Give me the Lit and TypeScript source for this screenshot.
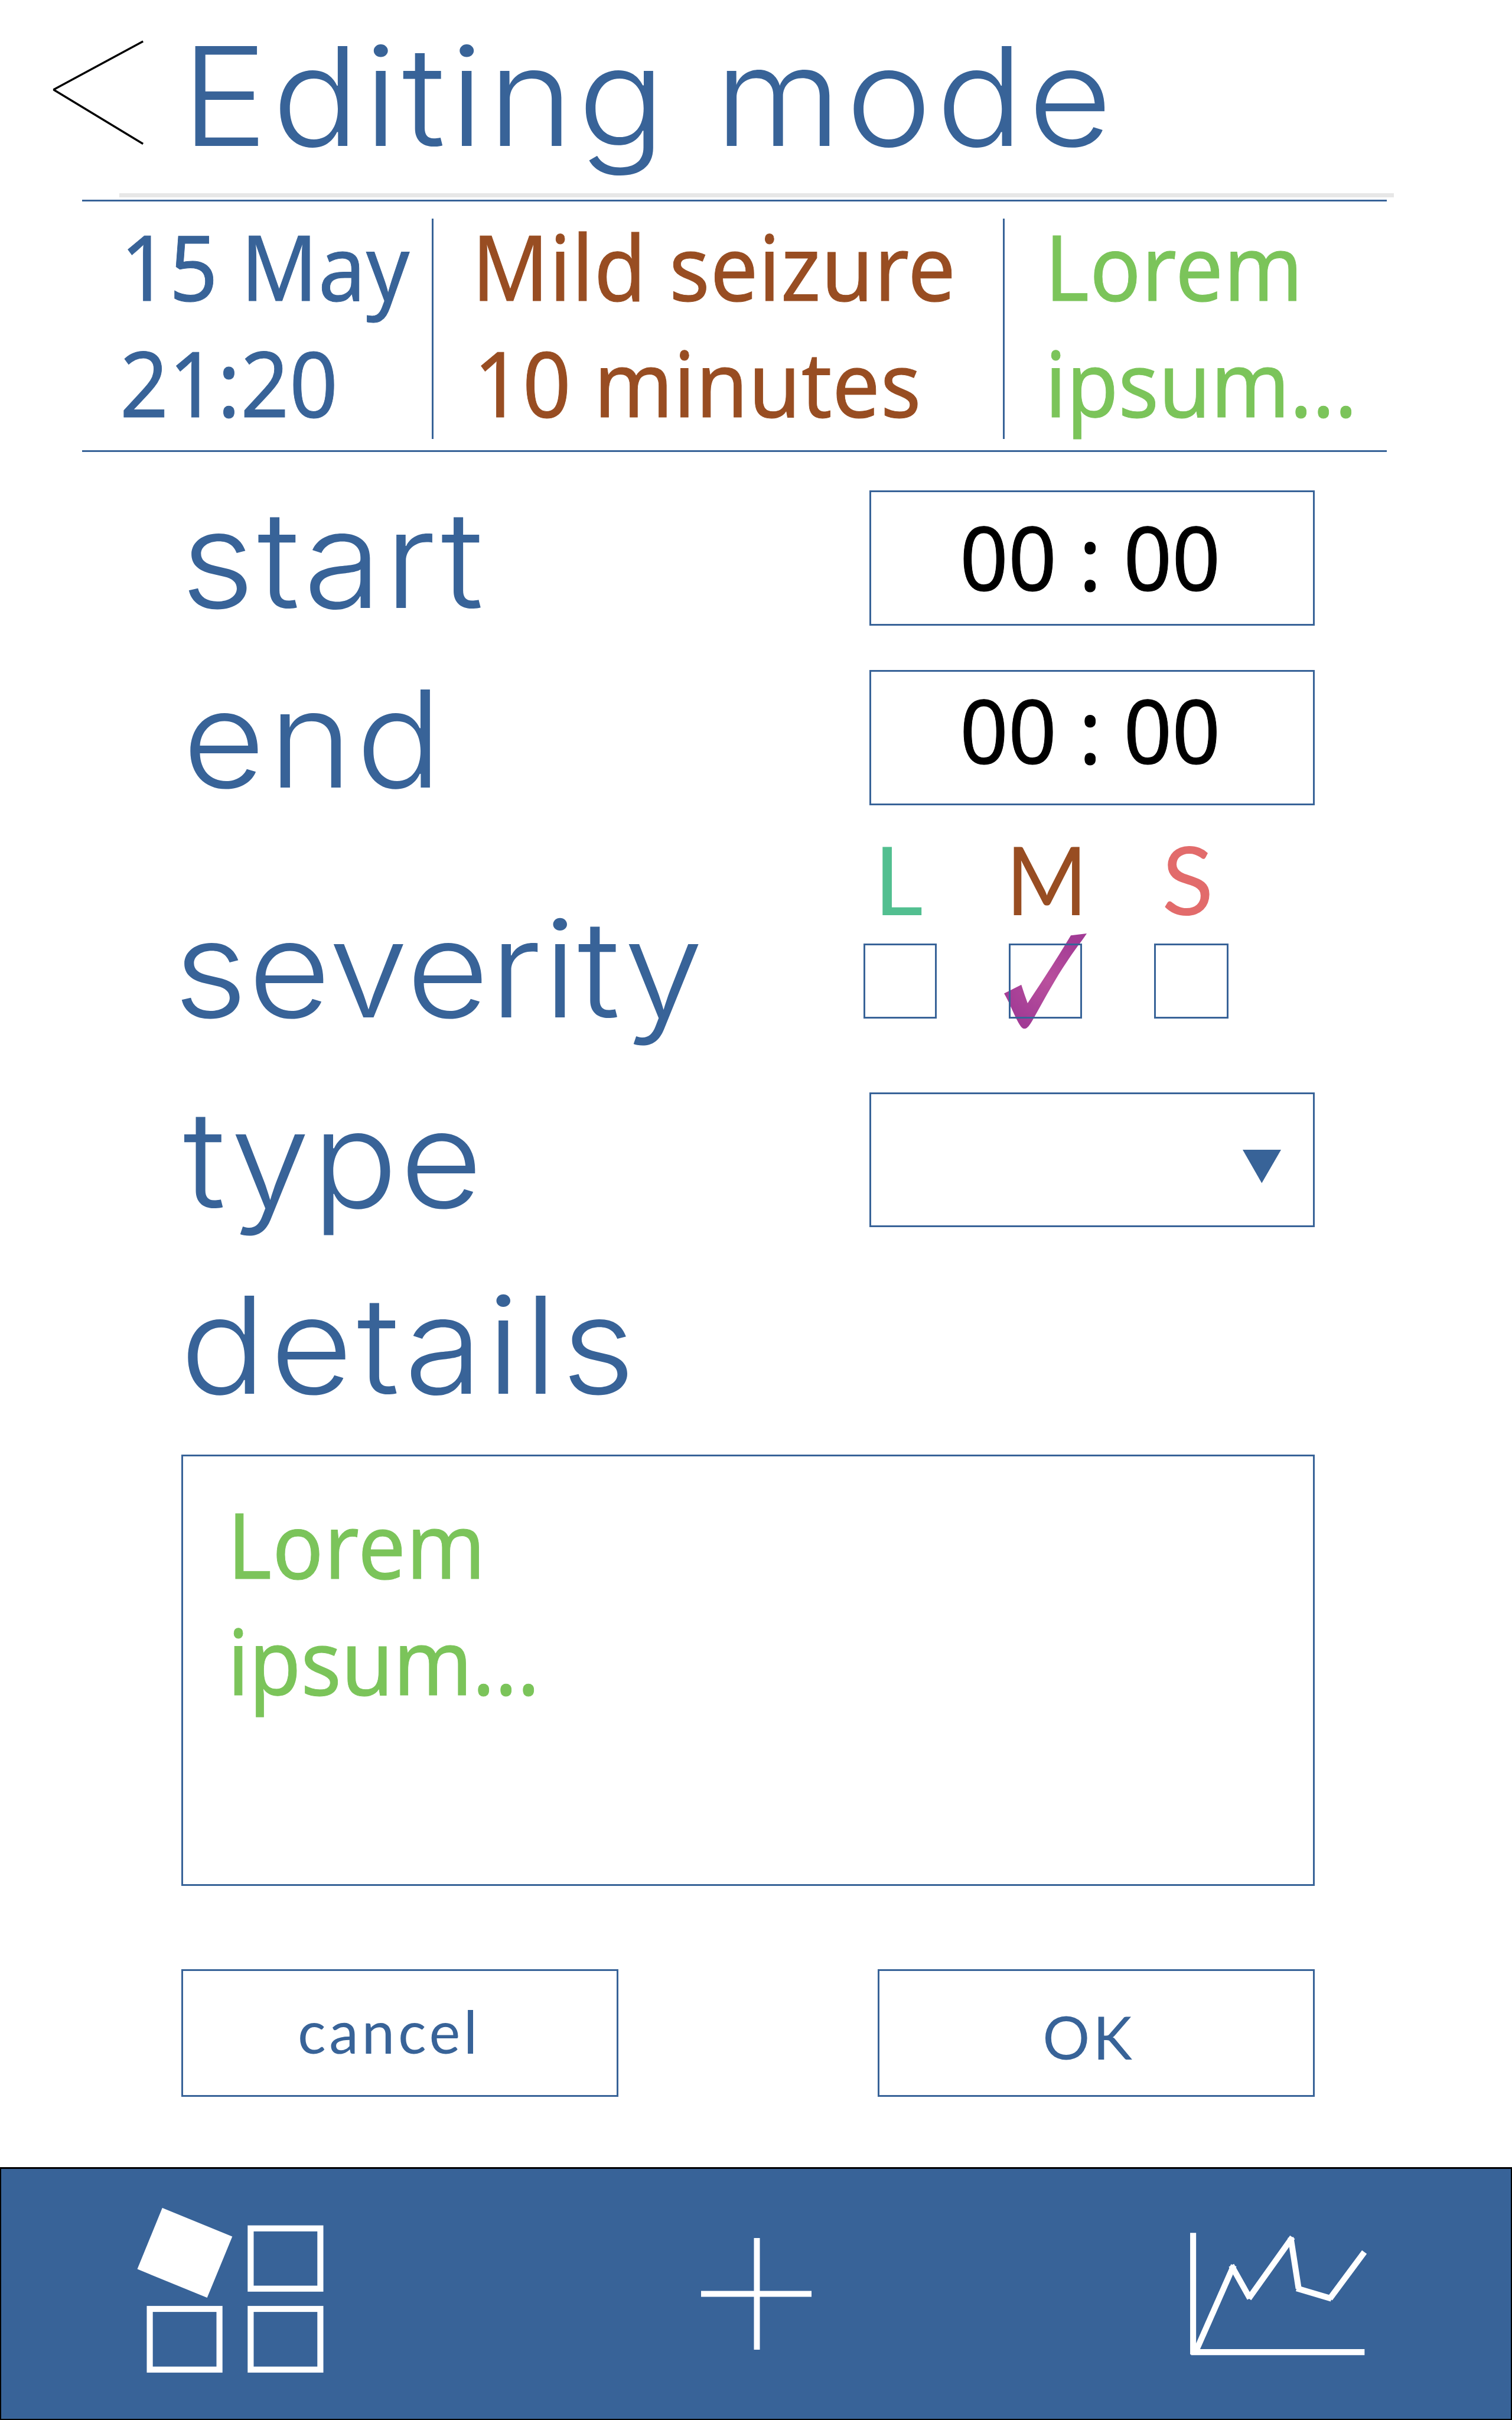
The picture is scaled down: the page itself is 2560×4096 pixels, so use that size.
import { LitElement, html, css, svg } from "lit";
import { customElement, property, state } from "lit/decorators.js";

const palette = css`
  :host {
    --blue: #386398;
    --brown: #984d22;
    --green: #7bc45a;
    --mint: #52bf90;
    --coral: #e26b6b;
    --humanist: "Noto Sans", "Open Sans", sans-serif;
    --heading: Inter, Roboto, sans-serif;
    --geometric: Lato, "Open Sans", sans-serif;
    box-sizing: border-box;
  }
  * {
    box-sizing: border-box;
  }
  svg {
    display: block;
    flex: none;
  }
`;

@customElement("title-bar")
class TitleBar extends LitElement {
  @property() heading = "";
  static styles = [
    palette,
    css`
      :host {
        display: flex;
        align-items: flex-start;
        height: 327px;
        padding-left: 88px;
      }
      .back {
        margin-top: 66px;
      }
      h1 {
        margin: 9px 0 0 61px;
        font: 300 232px/308.6px var(--heading);
        letter-spacing: 6.9px;
        color: var(--blue);
        white-space: nowrap;
        transform: scaleX(1.06);
        transform-origin: 0 50%;
      }
    `,
  ];
  render() {
    return html`
      <svg class="back" width="158" height="182" viewBox="88 66 158 182">
        <path d="M242.2 69.9 L90.7 151.8 L242.2 243.5" fill="none" stroke="#000" stroke-width="3.4" stroke-linejoin="bevel" />
      </svg>
      <h1>${this.heading}</h1>
    `;
  }
}

@customElement("entry-summary")
class EntrySummary extends LitElement {
  static styles = [
    palette,
    css`
      :host {
        display: block;
      }
      .shade {
        height: 7px;
        margin-left: 202px;
        width: 2158px;
        background: #e7e7e7;
      }
      .record {
        margin: 4px 0 0 139px;
        width: 2209px;
        height: 427px;
        border-top: 3px solid var(--blue);
        border-bottom: 3px solid var(--blue);
        display: grid;
        grid-template-columns: 592px 3px 964px 3px 1fr;
        padding-top: 10px;
      }
      .rule {
        background: var(--blue);
        margin: 19px 0 19px;
      }
      .cell {
        font: 400 154.5px/196.6px var(--humanist);
        -webkit-text-stroke: 1px currentColor;
        white-space: nowrap;
      }
      .line {
        transform: scaleX(0.93);
        transform-origin: 0 50%;
      }
      .when {
        padding-left: 64px;
        color: var(--blue);
      }
      .what {
        padding-left: 65px;
        color: var(--brown);
      }
      .note {
        padding-left: 68px;
        color: var(--green);
      }
      .date {
        margin-left: 1px;
        letter-spacing: 0.7px;
      }
      .time {
        letter-spacing: 0.5px;
      }
      .event {
        letter-spacing: 0.8px;
      }
      .length {
        margin-left: 3px;
        letter-spacing: 0.6px;
      }
      .head {
        letter-spacing: 0.8px;
      }
      .tail {
        letter-spacing: -0.6px;
      }
    `,
  ];
  render() {
    return html`
      <div class="shade"></div>
      <div class="record">
        <div class="cell when">
          <div class="line date">15 May</div>
          <div class="line time">21:20</div>
        </div>
        <div class="rule"></div>
        <div class="cell what">
          <div class="line event">Mild seizure</div>
          <div class="line length">10 minutes</div>
        </div>
        <div class="rule"></div>
        <div class="cell note">
          <div class="line head">Lorem</div>
          <div class="line tail">ipsum...</div>
        </div>
      </div>
    `;
  }
}

@customElement("severity-option")
class SeverityOption extends LitElement {
  @property() label = "";
  @property({ type: Boolean }) checked = false;
  static styles = [
    palette,
    css`
      :host {
        display: flex;
        flex-direction: column;
      }
      .letter {
        font: 400 162px/160px var(--geometric);
        text-align: center;
        height: 160px;
        margin-bottom: 29.5px;
        transform: translateX(var(--nudge, 0)) scaleX(var(--stretch, 1));
      }
      .box {
        position: relative;
        height: 127px;
      }
      .frame {
        position: absolute;
        inset: 0;
        border: 3px solid var(--blue);
      }
      .tick {
        position: absolute;
        left: -8px;
        top: -17px;
      }
    `,
  ];
  render() {
    return html`
      <div class="letter">${this.label}</div>
      <div class="box">
        ${this.checked
          ? html`<svg class="tick" width="140.1" height="161.1" viewBox="78 82 513 590">
              <defs>
                <radialGradient id="ink" gradientUnits="userSpaceOnUse" cx="350" cy="375" r="300">
                  <stop offset="0" stop-color="#b9509d" />
                  <stop offset="1" stop-color="#a23b95" />
                </radialGradient>
              </defs>
              <path
                fill="url(#ink)"
                d="M591 82 L492 94 C420 215 320 370 224 514 Q202 455 185 400 L78 454 C112 510 150 612 178 652 Q202 690 230 657 C245 637 258 615 266 599 C330 485 400 355 470 253 C520 178 550 143 591 82 Z"
              />
            </svg>`
          : null}
        <div class="frame"></div>
      </div>
    `;
  }
}

@customElement("entry-form")
class EntryForm extends LitElement {
  @state() private severity = "M";
  static styles = [
    palette,
    css`
      :host {
        display: block;
        width: 2226px;
        padding: 65px 0 0 307px;
      }
      .row {
        display: flex;
        justify-content: space-between;
        align-items: flex-start;
        height: 229px;
      }
      .start {
        margin-bottom: 75px;
      }
      .label {
        font: 300 228px/230px var(--heading);
        color: var(--blue);
        white-space: nowrap;
        margin-top: 1px;
        transform: scaleX(1.06);
        transform-origin: 0 50%;
      }
      .start .label {
        letter-spacing: 4.4px;
        margin-left: -1px;
      }
      .end .label {
        letter-spacing: 5.4px;
        margin-left: 2px;
      }
      .severity {
        height: 316px;
        margin: 44px 0 126px;
      }
      .severity .label {
        letter-spacing: 1.3px;
        margin: 117px 0 0 -13px;
      }
      .type {
        height: 228px;
      }
      .type .label {
        letter-spacing: 3.1px;
        margin: -3px 0 0 3px;
      }
      .details {
        margin: 74px 0 81px;
        height: 230px;
      }
      .details .label {
        letter-spacing: 6.4px;
        margin: 10px 0 0 -2px;
      }
      .field {
        display: flex;
        align-items: center;
        justify-content: center;
        width: 754px;
        height: 100%;
        border: 3px solid var(--blue);
      }
      .clock {
        font: 400 150px/160px var(--humanist);
        -webkit-text-stroke: 1px currentColor;
        color: #000;
        white-space: pre;
        transform: scaleX(0.957);
      }
      .start .clock {
        margin: 0 6px 6px 0;
      }
      .end .clock {
        margin: 0 6px 28px 0;
      }
      .choices {
        display: grid;
        grid-template-columns: 124px 124px 126px;
        column-gap: 122px;
        width: 764px;
      }
      .light {
        color: var(--mint);
        --nudge: -3px;
      }
      .medium {
        color: var(--brown);
        --nudge: -10px;
        --stretch: 0.92;
      }
      .strong {
        color: var(--coral);
        --nudge: -6px;
      }
      .select {
        justify-content: flex-end;
        padding-right: 54px;
      }
      .arrow {
        margin-top: 22px;
      }
      .memo {
        height: 730px;
        border: 3px solid var(--blue);
        padding: 49px 0 0 75px;
        font: 400 154.5px/197px var(--humanist);
        -webkit-text-stroke: 1px currentColor;
        color: var(--green);
      }
      .line {
        transform: scaleX(0.93);
        transform-origin: 0 50%;
        white-space: nowrap;
      }
      .head {
        letter-spacing: 0.8px;
      }
      .tail {
        letter-spacing: -0.6px;
      }
      .actions {
        display: flex;
        justify-content: space-between;
        margin-top: 141px;
      }
      .button {
        width: 740px;
        height: 216px;
        border: 3px solid var(--blue);
        display: flex;
        align-items: center;
        justify-content: center;
        font: 400 100px/120px var(--geometric);
        color: var(--blue);
      }
      .cancel {
        letter-spacing: 5.6px;
        padding: 0 36px 8px 0;
      }
      .ok {
        letter-spacing: 5px;
        padding: 11px 25px 0 0;
      }
    `,
  ];
  render() {
    return html`
      <div class="row start">
        <div class="label">start</div>
        <div class="field"><span class="clock">00 : 00</span></div>
      </div>
      <div class="row end">
        <div class="label">end</div>
        <div class="field"><span class="clock">00 : 00</span></div>
      </div>
      <div class="row severity">
        <div class="label">severity</div>
        <div class="choices">
          <severity-option class="light" label="L" ?checked=${this.severity === "L"}></severity-option>
          <severity-option class="medium" label="M" ?checked=${this.severity === "M"}></severity-option>
          <severity-option class="strong" label="S" ?checked=${this.severity === "S"}></severity-option>
        </div>
      </div>
      <div class="row type">
        <div class="label">type</div>
        <div class="field select">
          <svg class="arrow" width="65" height="57" viewBox="0 0 65 57"><path d="M0 0 H65 L32.3 56.5 Z" fill="#386398" /></svg>
        </div>
      </div>
      <div class="row details"><div class="label">details</div></div>
      <div class="memo">
        <div class="line head">Lorem</div>
        <div class="line tail">ipsum...</div>
      </div>
      <div class="actions">
        <div class="button cancel">cancel</div>
        <div class="button ok">OK</div>
      </div>
    `;
  }
}

@customElement("tab-bar")
class TabBar extends LitElement {
  static styles = [
    palette,
    css`
      :host {
        display: flex;
        align-items: flex-start;
        justify-content: space-between;
        padding: 0 242px 0 230px;
        background: var(--blue);
        border: 2px solid #000;
        border-top-width: 3px;
      }
      .tiles {
        margin-top: 66px;
      }
      .add {
        margin-top: 117px;
      }
      .chart {
        margin-top: 105px;
      }
    `,
  ];
  render() {
    const tiles = [
      [424.4, 3771.7, 118, 102],
      [253.6, 3908, 118, 102.7],
      [424.4, 3908, 118, 102.7],
    ];
    const strokes = [
      "M76 72 V825",
      "M63 811 H1139",
      "M86 822 L328 273",
      "M313 273 L428 478",
      "M421 479 L692 99",
      "M681 100 L730 417",
      "M718 416 L934 480",
      "M924 479 L1138 191",
    ];
    return html`
      <svg class="tiles" width="316" height="280" viewBox="232 3737 316 280">
        <path d="M274.8 3737 L393.3 3785.6 L350.7 3889.1 L232.5 3840.6 Z" fill="#fff" />
        ${tiles.map(
          ([x, y, w, h]) => svg`<rect x=${x} y=${y} width=${w} height=${h} fill="none" stroke="#fff" stroke-width="10.2" />`
        )}
      </svg>
      <svg class="add" width="187" height="189" viewBox="0 0 187 189">
        <path d="M0 94.5 H187 M94.5 0 V189" stroke="#fff" stroke-width="10" />
      </svg>
      <svg class="chart" width="303.1" height="213" viewBox="50 60 1110 780">
        ${strokes.map((d) => svg`<path d=${d} fill="none" stroke="#fff" stroke-width="37" />`)}
      </svg>
    `;
  }
}

@customElement("app-root")
class AppRoot extends LitElement {
  static styles = [
    palette,
    css`
      :host {
        display: flex;
        flex-direction: column;
        width: 2560px;
        height: 4096px;
        background: #fff;
        overflow: hidden;
      }
      .form {
        flex: none;
        height: 2903px;
      }
      .tabs {
        flex: 1;
      }
    `,
  ];
  render() {
    return html`
      <title-bar heading="Editing mode"></title-bar>
      <entry-summary></entry-summary>
      <entry-form class="form"></entry-form>
      <tab-bar class="tabs"></tab-bar>
    `;
  }
}
